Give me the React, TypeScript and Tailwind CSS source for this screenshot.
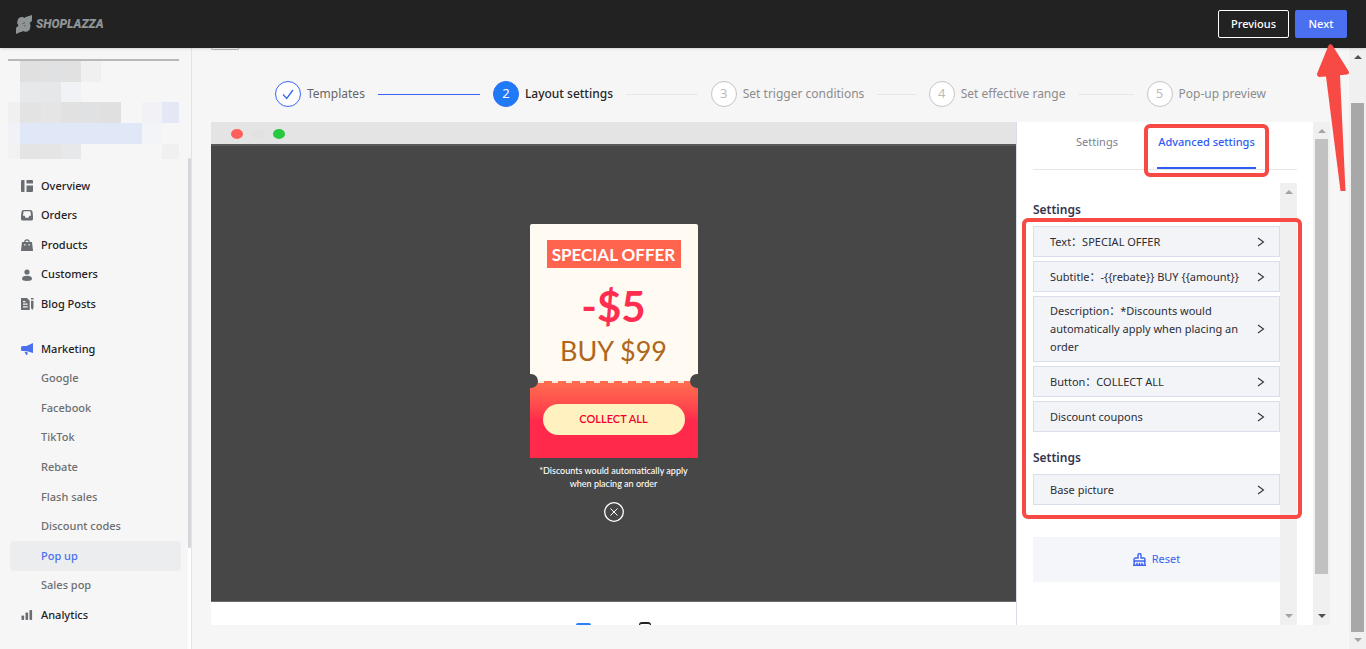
import type { ReactNode } from 'react';
import clsx from 'clsx';

interface NavItem {
  label: string;
  icon?: ReactNode;
  active?: boolean;
}

const MAIN_NAV: NavItem[] = [
  {
    label: 'Overview',
    icon: <path d="M1 0h2.500v12H1a1 1 0 0 1-1-1V1a1 1 0 0 1 1-1zM5.500 0H11a1 1 0 0 1 1 1v2.500H5.500zM5.500 5.500H12V11a1 1 0 0 1-1 1H5.500z" />,
  },
  {
    label: 'Orders',
    icon: (
      <path
        fillRule="evenodd"
        d="M2.500 1h7a2 2 0 0 1 2 1.700L12 7v3a1.500 1.500 0 0 1-1.500 1.500h-9A1.500 1.500 0 0 1 0 10V7l.500-4.300A2 2 0 0 1 2.500 1zM2.600 2.300 2 6.800h1.700a2.300 2.300 0 0 0 4.600 0H10l-.600-4.500z"
      />
    ),
  },
  {
    label: 'Products',
    icon: (
      <path
        fillRule="evenodd"
        d="M3.200 3a2.800 2.800 0 0 1 5.600 0H11l1 8.500a.500.500 0 0 1-.500.500h-11a.500.500 0 0 1-.500-.500L1 3zM4.400 3h3.200a1.600 1.600 0 0 0-3.200 0zM3.300 5v1.500h1.200V5zM7.500 5v1.500h1.200V5z"
      />
    ),
  },
  {
    label: 'Customers',
    icon: (
      <>
        <circle cx="6" cy="3" r="2.600" />
        <path d="M6 6.800c3.200 0 5 1.200 5 3S9 12 6 12s-5-.400-5-2.200 1.800-3 5-3z" />
      </>
    ),
  },
  {
    label: 'Blog Posts',
    icon: (
      <path
        fillRule="evenodd"
        d="M0 0h6l2.700 2.700V12H0zM2 3v1.200h2.500V3zM2 5.600v1.200h4.600V5.600zM2 8.300v1.200h4.600V8.300zM10 0h2.500v1.500H10zM10 2.700h2.500V10l-1.200 2L10 10z"
      />
    ),
  },
];

const MARKETING_NAV: NavItem[] = [
  {
    label: 'Marketing',
    icon: <path className="text-[#4a70f0]" fill="currentColor" d="M12 0v10L5.500 8H1.500A1.500 1.500 0 0 1 0 6.500v-2A1.500 1.500 0 0 1 1.500 3h4zM3.500 8.800h3V11a1 1 0 0 1-1.500.700z" />,
  },
  { label: 'Google' },
  { label: 'Facebook' },
  { label: 'TikTok' },
  { label: 'Rebate' },
  { label: 'Flash sales' },
  { label: 'Discount codes' },
  { label: 'Pop up', active: true },
  { label: 'Sales pop' },
  {
    label: 'Analytics',
    icon: (
      <>
        <rect x="0.500" y="6.500" width="2.600" height="4.500" rx="0.800" />
        <rect x="4.500" y="3.500" width="2.600" height="7.500" rx="0.800" />
        <rect x="8.500" y="1" width="2.600" height="10" rx="0.800" />
      </>
    ),
  },
];

const STEPS = ['Templates', 'Layout settings', 'Set trigger conditions', 'Set effective range', 'Pop-up preview'];
const CURRENT_STEP = 1;

const MASK_CELLS = [
  'bg-[#f6f6f6]', 'bg-[#e0e0e0]', 'bg-[#e0e1e3]', 'bg-[#e1e1e1]', 'bg-[#f0f0f0]', 'bg-[#f6f6f6]', 'bg-[#f6f6f6]', 'bg-[#f6f6f6]', 'bg-[#f6f6f6]',
  'bg-[#f6f6f6]', 'bg-[#e7e8ea]', 'bg-[#e6e7e9]', 'bg-[#f1f2f5]', 'bg-[#f6f6f6]', 'bg-[#f6f6f6]', 'bg-[#f6f6f6]', 'bg-[#f6f6f6]', 'bg-[#f6f6f6]',
  'bg-[#f0f0f0]', 'bg-[#e3e3e3]', 'bg-[#e5e5e5]', 'bg-[#e1e1e1]', 'bg-[#e0e1e3]', 'bg-[#e0e0e0]', 'bg-[#f6f6f6]', 'bg-[#f1f1f6]', 'bg-[#e4e7f5]',
  'bg-[#f1f2f7]', 'bg-[#e0e8f8]', 'bg-[#e0e8f8]', 'bg-[#e0e8f8]', 'bg-[#e0e8f8]', 'bg-[#e0e8f8]', 'bg-[#e0e8f8]', 'bg-[#f3f4f7]', 'bg-[#f6f6f6]',
  'bg-[#f2f2f2]', 'bg-[#e4e4e4]', 'bg-[#e5e5e5]', 'bg-[#e7e8ea]', 'bg-[#f6f6f6]', 'bg-[#f6f6f6]', 'bg-[#f6f6f6]', 'bg-[#f6f6f6]', 'bg-[#f0f0f0]',
];

function Header() {
  return (
    <header className="relative z-10 flex h-12 shrink-0 items-center justify-between bg-[#222] pr-[19px] pl-4 shadow-sm">
      <a href="#" className="flex items-center gap-1 text-[#8f9497]">
        <svg width="16" height="19" viewBox="0 0 16 19" fill="currentColor">
          <path d="M16 0v4.500c0 1.700-.900 2.900-2.500 3.300.700.500.900 1.200.700 2 .500 1 .400 2.200-.200 3 .100 2-1.200 3.500-3 3.700-1.400.400-2.800.200-3.800-.600-.700.700-1.600 1-2.600 1.100L0 19v-4.600c0-1.900 1-3.100 2.700-3.400-.700-.500-.9-1.100-.800-1.800C.900 8.200 1 6.900 1.600 6c0-1.800 1.200-3.400 3-3.700 1.500-.500 2.900-.200 3.900.800.700-1 1.700-1.300 2.900-1.600z" />
          <path d="m6.500 8.800 2.500-1M8 11.200l1.500-.700" stroke="#222" strokeWidth="0.500" />
        </svg>
        <span className="font-[Roboto,sans-serif] text-[12px] leading-5 font-black italic">SHOPLAZZA</span>
      </a>
      <div className="flex gap-1.5 text-[11px] font-medium text-white">
        <button className="h-7 w-[71px] rounded-xs border border-white">Previous</button>
        <div className="relative">
          <button className="h-7 w-[52px] rounded-xs bg-[#4a70f0]">Next</button>
          <svg className="pointer-events-none absolute top-[34px] left-[21px]" width="33" height="148" viewBox="-1 0 33 148" fill="#f84a45">
            <path d="M11.500 1.500Q13.500-1.500 15.500 1.500L31.500 27Q33 30 30 30.500L23 31.200 28.500 147H23.500L9 32.500 2 33Q-1 32 .500 28.500z" />
          </svg>
        </div>
      </div>
    </header>
  );
}

function NavList({ items, className }: { items: NavItem[]; className: string }) {
  return (
    <ul className={clsx('grid auto-rows-fr', className)}>
      {items.map(({ label, icon, active }) => (
        <li key={label}>
          <a
            href="#"
            className={clsx(
              'flex h-full items-center rounded-sm pl-[11px] text-[11px] font-medium',
              active ? 'bg-[#ecedef] text-[#4a70f0]' : icon ? 'text-[#1f2124]' : 'text-[#6c6e71]',
            )}
          >
            <span className="w-5 text-[#6a6d72]">
              {icon && (
                <svg width="13" height="12" viewBox="0 0 13 12" fill="currentColor">
                  {icon}
                </svg>
              )}
            </span>
            {label}
          </a>
        </li>
      ))}
    </ul>
  );
}

function Sidebar() {
  return (
    <aside className="flex w-48 shrink-0 border-r border-[#e3e4e6]">
      <div className="flex-1 pt-[11px] pl-2">
        <div className="mr-[9px] h-0.5 bg-[#b9b9b9]" />
        <div className="mr-[9px] grid grid-cols-[12px_21px_20px_20px_20px_20px_21px_20px_17px] grid-rows-[21px_20px_21px_21px_15px]">
          {MASK_CELLS.map((cell, i) => (
            <span key={i} className={cell} />
          ))}
        </div>
        <nav className="mt-3 mr-[7px] ml-0.5 flex flex-col gap-[15px]">
          <NavList items={MAIN_NAV} className="h-[148px]" />
          <NavList items={MARKETING_NAV} className="h-[296px]" />
        </nav>
      </div>
      <div className="flex w-[3px] flex-col pt-[110px]">
        <div className="h-[390px] rounded-full bg-[#d4d6da]" />
        <div className="flex-1 bg-white" />
      </div>
    </aside>
  );
}

function Steps() {
  return (
    <ol className="mx-16 grid grid-cols-[repeat(4,1fr)_auto]">
      {STEPS.map((label, i) => (
        <li key={label} className="flex items-center">
          <span
            className={clsx(
              'flex size-[26px] shrink-0 items-center justify-center rounded-full border text-[13px]',
              i < CURRENT_STEP && 'border-[#3b66f5] bg-white text-[#3b66f5]',
              i === CURRENT_STEP && 'border-[#2f6bf7] bg-[#1f7af8] text-white',
              i > CURRENT_STEP && 'border-[#c4c4c4] bg-white text-[#bbb]',
            )}
          >
            {i < CURRENT_STEP ? (
              <svg width="12" height="11" viewBox="0 0 12 11" fill="none" stroke="currentColor" strokeWidth="1.300">
                <path d="m1 5.500 3.700 4L11 1" />
              </svg>
            ) : (
              i + 1
            )}
          </span>
          <span
            className={clsx(
              'ml-1.5 text-[12px] leading-[26px] whitespace-nowrap',
              i < CURRENT_STEP && 'text-[#666]',
              i === CURRENT_STEP && 'font-medium text-[#262626]',
              i > CURRENT_STEP && 'text-[#8c8c8c]',
            )}
          >
            {label}
          </span>
          {i < STEPS.length - 1 && <span className={clsx('mx-[13px] h-px flex-1', i < CURRENT_STEP ? 'bg-[#3b66f5]' : 'bg-[#e6e6e6]')} />}
        </li>
      ))}
    </ol>
  );
}

function Coupon() {
  return (
    <div className="flex w-[168px] flex-col items-center pb-0.5 font-[Lato,sans-serif]">
      <div className="relative w-full overflow-hidden rounded-t-xs text-center">
        <div className="h-[157px] bg-[#fffbf2] px-[17px] pt-4">
          <div className="h-7 bg-[#ff654e] text-[17px] leading-[30px] font-bold whitespace-nowrap text-white">SPECIAL OFFER</div>
          <div className="mt-3.5 text-[42px] leading-[48px] font-bold text-[#ff2d4f]">-$5</div>
          <div className="mt-1 text-[27px] leading-[34px] text-[#b0661a]">BUY $99</div>
        </div>
        <div className="h-0.5 bg-[repeating-linear-gradient(90deg,#ff6b50_0_8px,#f3ebe2_8px_14px)]" />
        <div className="h-[75px] bg-linear-to-b from-[#ff6b50] to-[#ff294b] to-50% px-[13px] pt-[21px]">
          <button className="h-[31px] w-full rounded-full bg-[#fff2c0] text-[11px] font-semibold text-[#f5002c]">COLLECT ALL</button>
        </div>
        <span className="absolute top-[150px] -left-1.5 size-3.5 rounded-full bg-[#474747]" />
        <span className="absolute top-[150px] -right-1.5 size-3.5 rounded-full bg-[#474747]" />
      </div>
      <p className="mt-1.5 text-center text-[9px] leading-[13px] font-medium text-white">
        *Discounts would automatically apply
        <br />
        when placing an order
      </p>
      <button aria-label="Close" className="mt-3 text-white">
        <svg width="20" height="20" viewBox="0 0 20 20" fill="none" stroke="currentColor">
          <circle cx="10" cy="10" r="9.300" strokeWidth="1.300" />
          <path d="m6.500 6.500 7 7m0-7-7 7" />
        </svg>
      </button>
    </div>
  );
}

function Preview() {
  return (
    <section className="flex min-w-0 flex-1 flex-col bg-white">
      <div className="flex h-[22px] shrink-0 items-center gap-[9px] bg-[#e4e4e4] pt-0.5 pl-5">
        <span className="h-2.5 w-3 rounded-[50%] bg-[#ff605c]" />
        <span className="h-2.5 w-3 rounded-[50%] bg-[#e1e1e1]" />
        <span className="h-2.5 w-3 rounded-[50%] bg-[#28c941]" />
      </div>
      <div className="flex flex-1 items-center justify-center border-t-2 border-b border-t-[#5a5a5a] border-b-[#6c6c6c] bg-[#474747]">
        <Coupon />
      </div>
      <div className="flex h-[23px] shrink-0 items-end justify-center gap-12 overflow-hidden">
        <span className="h-0.5 w-[15px] rounded-t-sm bg-[#2b80f7]" />
        <span className="h-[3px] w-3 rounded-t-sm border-x border-t-2 border-[#222]" />
      </div>
    </section>
  );
}

function Arrow({ down, dark }: { down?: boolean; dark?: boolean }) {
  return (
    <svg className={dark ? 'text-[#505050]' : 'text-[#a3a3a3]'} width="8" height="4" viewBox="0 0 8 4" fill="currentColor">
      <path d={down ? 'M0 0h8L4 4z' : 'M0 4h8L4 0z'} />
    </svg>
  );
}

function SettingRow({ children }: { children: ReactNode }) {
  return (
    <button className="flex min-h-[31px] w-full items-center justify-between border border-[#d9deec] bg-[#f3f4f8] py-[5px] pr-3.5 pl-4 text-left text-[11px] leading-[18px] text-[#2c2e33]">
      <span className="w-[198px]">{children}</span>
      <svg width="8" height="10" viewBox="0 0 8 10" fill="none" stroke="#333" strokeWidth="1.100">
        <path d="m1 1 5.500 4L1 9" />
      </svg>
    </button>
  );
}

function SettingsPanel() {
  return (
    <section className="flex w-[297px] shrink-0 flex-col border-l border-[#d9deec] bg-white pr-4 pl-4">
      <div className="flex h-12 shrink-0 border-b border-[#e6e6e6] text-[11px]" role="tablist">
        <button role="tab" aria-selected="false" className="ml-6 w-20 pb-1.5 text-[#7d8090]">
          Settings
        </button>
        <button role="tab" aria-selected="true" className="relative ml-5 w-[99px] border-b-2 border-[#2f5cf5] pb-1 font-medium whitespace-nowrap text-[#2f5cf5]">
          Advanced settings
          <span className="pointer-events-none absolute -inset-x-[13px] top-0.5 h-[53px] rounded-md border-4 border-[#f84a45]" />
        </button>
      </div>
      <div className="mt-[13px] flex flex-1">
        <div className="relative flex-1 pt-[18px]">
          <h3 className="text-[12px] leading-[18px] font-semibold text-[#33354f]">Settings</h3>
          <div className="mt-[7px] flex flex-col gap-1">
            <SettingRow>Text：SPECIAL OFFER</SettingRow>
            <SettingRow>{'Subtitle：-{{rebate}} BUY {{amount}}'}</SettingRow>
            <SettingRow>Description：*Discounts would automatically apply when placing an order</SettingRow>
            <SettingRow>Button：COLLECT ALL</SettingRow>
            <SettingRow>Discount coupons</SettingRow>
          </div>
          <h3 className="mt-[17px] mb-[7px] text-[12px] leading-[18px] font-semibold text-[#33354f]">Settings</h3>
          <SettingRow>Base picture</SettingRow>
          <button className="mt-8 flex h-[45px] w-full items-center justify-center gap-1.5 bg-[#f5f6f9] text-[11px] text-[#3b62ee]">
            <svg width="13" height="13" viewBox="0 0 13 13" fill="none" stroke="currentColor" strokeWidth="1.400">
              <path d="M5 5V2a1.500 1.500 0 0 1 3 0v3h2.500a1.500 1.500 0 0 1 1.500 1.500V8H1V6.500A1.500 1.500 0 0 1 2.500 5zM1.500 8 .800 12.300h11.400L11.500 8M4 12V9.800M6.500 12V9.800M9 12V9.800" />
            </svg>
            Reset
          </button>
          <span className="pointer-events-none absolute top-[35px] -right-[22px] -left-[11px] h-[301px] rounded-md border-4 border-[#f84a45]" />
        </div>
        <div className="flex w-[17px] flex-col items-center justify-between bg-[#f0f0f0] py-[7px]">
          <Arrow />
          <Arrow down />
        </div>
      </div>
    </section>
  );
}

export default function App() {
  return (
    <div className="flex h-screen flex-col overflow-hidden bg-[#f6f6f6] font-['Noto_Sans','Noto_Sans_CJK_SC',sans-serif]">
      <Header />
      <div className="flex min-h-0 flex-1">
        <Sidebar />
        <main className="flex min-w-0 flex-1 flex-col pr-[19px] pb-6 pl-[19px]">
          <div className="h-0.5 w-7 rounded-b-sm border-x border-b border-[#b5b5b5]" />
          <div className="pt-[31px] pb-[15px]">
            <Steps />
          </div>
          <div className="flex min-h-0 flex-1">
            <Preview />
            <SettingsPanel />
            <div className="flex w-[17px] flex-col items-center bg-[#f0f0f0] py-[7px]">
              <Arrow />
              <div className="mt-1.5 mb-10 w-[13px] flex-1 bg-[#c1c1c1]" />
              <Arrow down dark />
            </div>
          </div>
        </main>
        <div className="flex w-[17px] flex-col items-center bg-[#f0f0f0] py-[7px]">
          <Arrow dark />
          <div className="mt-11 mb-1.5 w-[13px] flex-1 bg-[#a8a8a8]" />
          <Arrow down />
        </div>
      </div>
    </div>
  );
}
